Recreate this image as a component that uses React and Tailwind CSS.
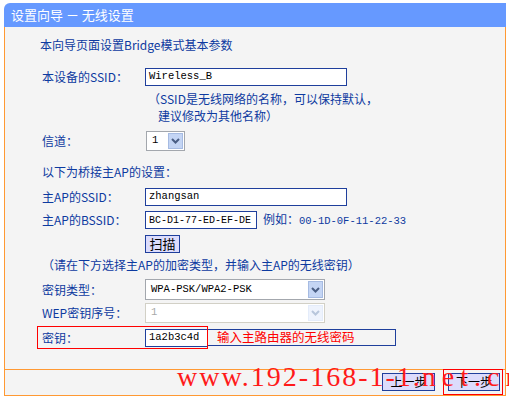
import React from 'react';

const cjk = { fontFamily: '"Noto Sans CJK SC", "Liberation Sans", sans-serif' };
const mono = { fontFamily: '"Liberation Mono", "Noto Sans CJK SC", monospace' };

function Chevron({ color = '#4a5e84' }) {
  return (
    <svg width="9" height="6" viewBox="0 0 9 6">
      <polyline points="1,1 4.5,4.5 8,1" fill="none" stroke={color} strokeWidth="2" />
    </svg>
  );
}

function TextBox({ value, className = '' }) {
  return (
    <div
      className={`flex h-[18px] items-center overflow-hidden whitespace-nowrap border border-[#1f3f9c] bg-white pl-[3px] text-[10.5px] text-black ${className}`}
      style={mono}
    >
      {value}
    </div>
  );
}

function SelectBox({ value, className = '', disabled = false }) {
  return (
    <div
      className={`flex items-stretch border bg-white p-[1px] ${
        disabled ? 'border-[#d2d0c6]' : 'border-[#a3a7ad]'
      } ${className}`}
    >
      <div
        className={`flex flex-1 items-center pl-[4px] text-[10.5px] ${disabled ? 'text-[#a8a8a8]' : 'text-black'}`}
        style={mono}
      >
        {value}
      </div>
      <div
        className={`flex w-[15px] items-center justify-center border ${
          disabled ? 'border-[#e4ecfa] bg-[#eef3fd]' : 'border-[#a6bbe2] bg-[#c4d5f4]'
        }`}
      >
        <Chevron color={disabled ? '#b8c6dc' : '#4a5e84'} />
      </div>
    </div>
  );
}

function Row({ label, children, className = '' }) {
  return (
    <div className={`flex items-center ${className}`}>
      <div className="box-content w-[103px] pl-[37px] text-[12px] text-[#0d3aa0]">{label}</div>
      {children}
    </div>
  );
}

export default function App() {
  return (
    <div className="min-h-screen bg-white pl-[4px] pt-[3px]" style={cjk}>
      <div className="relative w-[502px]">
        <div className="h-[24px] rounded-tl-[6px] bg-[#6699ff] pl-[7px] text-[13px] leading-[24px] text-white">
          设置向导 － 无线设置
        </div>

        <div className="border-x border-b border-[#ff9933] bg-[#f4f4f4]">
          <div className="h-[343px] border-b border-[#ff9933] pt-[10px] text-[12px] text-[#0d3aa0]">
            <div className="h-[16px] pl-[35px] leading-[16px]">本向导页面设置Bridge模式基本参数</div>

            <Row label="本设备的SSID：" className="mt-[15px] h-[18px]">
              <TextBox value="Wireless_B" className="w-[202px]" />
            </Row>

            <div className="mt-[5px] h-[16px] pl-[143px] leading-[16px]">（SSID是无线网络的名称，可以保持默认，</div>
            <div className="mt-[1px] h-[16px] pl-[153px] leading-[16px]">建议修改为其他名称）</div>

            <Row label="信道：" className="mt-[7px] h-[20px]">
              <SelectBox value="1" className="ml-[1px] h-[20px] w-[39px]" />
            </Row>

            <div className="mt-[13px] h-[16px] pl-[37px] leading-[16px]">以下为桥接主AP的设置：</div>

            <Row label="主AP的SSID：" className="mt-[8px] h-[18px]">
              <TextBox value="zhangsan" className="w-[202px]" />
            </Row>

            <Row label="主AP的BSSID：" className="mt-[5px] h-[18px]">
              <TextBox value="BC-D1-77-ED-EF-DE" className="w-[112px] text-[10px]" />
              <span className="ml-[6px] whitespace-nowrap">
                例如：<span style={mono} className="text-[10.5px]">00-1D-0F-11-22-33</span>
              </span>
            </Row>

            <div className="mt-[6px] pl-[140px]">
              <button className="flex h-[18px] w-[35px] items-center justify-center border border-[#1f3f9c] bg-[#dcdcfc] text-[13px] text-black">
                扫描
              </button>
            </div>

            <div className="mt-[4px] h-[16px] pl-[37px] leading-[16px]">（请在下方选择主AP的加密类型，并输入主AP的无线密钥）</div>

            <Row label="密钥类型：" className="mt-[6px] h-[21px]">
              <SelectBox value="WPA-PSK/WPA2-PSK" className="h-[21px] w-[180px]" />
            </Row>

            <Row label="WEP密钥序号：" className="mt-[3px] h-[20px]">
              <SelectBox value="1" disabled className="h-[20px] w-[180px]" />
            </Row>

            <div className="relative mt-[3px] flex h-[23px] items-center">
              <div className="absolute left-[32px] top-0 h-[23px] w-[171px] border border-[#ff0000]" />
              <div className="box-content w-[103px] pl-[37px]">密钥：</div>
              <TextBox value="1a2b3c4d" className="h-[17px] w-[63px]" />
              <div className="flex h-[17px] w-[188px] items-center border border-l-0 border-[#1f3f9c] pl-[9px] text-[12.5px] text-[#ff0000]">
                输入主路由器的无线密码
              </div>
            </div>
          </div>

          <div className="flex h-[25px] items-start justify-end gap-[13px] pr-[5px] pt-[3px]">
            <button className="flex h-[18px] w-[53px] items-center justify-center border border-[#1f3f9c] bg-[#dcdcfc] text-[12px] text-black">
              上一步
            </button>
            <button className="flex h-[18px] w-[52px] items-center justify-center border border-[#1f3f9c] bg-[#dcdcfc] text-[12px] text-black">
              下一步
            </button>
          </div>
        </div>

        <div className="absolute left-[439px] top-[366px] h-[26px] w-[60px] border border-[#ff0000]" />
        <div
          className="pointer-events-none absolute left-[173px] top-[356px] whitespace-nowrap text-[28px] leading-[36px] tracking-[2px] text-[#ff1a1a]"
          style={{ fontFamily: '"Liberation Serif", serif' }}
        >
          www.192-168-1-1.<span className="tracking-[6px]">net.cn</span>
        </div>
      </div>
    </div>
  );
}
